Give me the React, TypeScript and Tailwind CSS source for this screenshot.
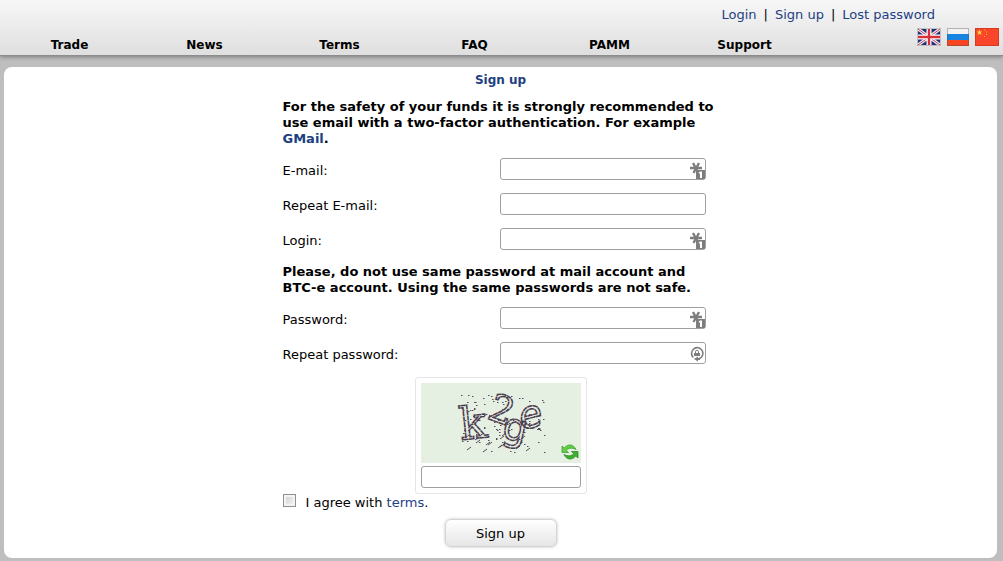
import React from 'react';

const navItems = ['Trade', 'News', 'Terms', 'FAQ', 'PAMM', 'Support'];

const StarOne: React.FC = () => (
  <svg width="17" height="18" viewBox="0 0 17 18" aria-hidden="true">
    <path d="M1 7h12M4 2l5.500 10M10 2L4.500 12" stroke="#7d7d7d" strokeWidth="2.400" />
    <rect x="7" y="9" width="9" height="9" fill="#7d7d7d" />
    <path d="M11 10.500h2V17h-2v-4.500H9.800v-1z" fill="#fff" />
  </svg>
);

const LockCycle: React.FC = () => (
  <svg width="17" height="18" viewBox="0 0 17 18" aria-hidden="true">
    <path d="M4.300 12.500a5.700 5.700 0 1 1 5.700 1.300" fill="none" stroke="#7d7d7d" strokeWidth="1.600" />
    <path d="M5 14l4-2.500V13h2v2H9v1.500z" fill="#7d7d7d" />
    <rect x="5" y="8" width="6" height="3" fill="#7d7d7d" />
    <path d="M6.500 8V6.800a1.500 1.500 0 0 1 3 0V8" fill="none" stroke="#7d7d7d" />
  </svg>
);

const FlagUK: React.FC = () => (
  <svg width="24" height="18" viewBox="0 0 24 18" aria-hidden="true">
    <rect x="1" y="1" width="22" height="16" fill="#20307c" />
    <path d="M1 1l22 16M23 1L1 17" stroke="#e8e8f0" strokeWidth="3.200" />
    <path d="M1 1l22 16M23 1L1 17" stroke="#d0404a" strokeWidth="1" />
    <path d="M12 1v16M1 9h22" stroke="#fff" strokeWidth="5" />
    <path d="M12 1v16M1 9h22" stroke="#d8303a" strokeWidth="2.400" />
    <rect x=".5" y=".5" width="23" height="17" fill="none" stroke="#777" strokeOpacity=".35" />
  </svg>
);

const FlagRussia: React.FC = () => (
  <svg width="22" height="18" viewBox="0 0 22 18" aria-hidden="true">
    <rect width="22" height="6" fill="#f2f2f2" />
    <rect y="6" width="22" height="6" fill="#1684e0" />
    <rect y="12" width="22" height="6" fill="#f8441f" />
    <rect x=".5" y=".5" width="21" height="17" fill="none" stroke="#555" strokeOpacity=".4" />
  </svg>
);

const FlagChina: React.FC = () => (
  <svg width="24" height="18" viewBox="0 0 24 18" aria-hidden="true">
    <rect width="24" height="18" fill="#f9452a" />
    <path d="M4.500 1.500l.8 2h2.100L5.800 4.800l.6 2.100-1.900-1.200-1.900 1.200.6-2.100L1.600 3.500h2.100z" fill="#ffd83c" />
    <path d="M9 2h1M11 4h1M11 6.500h1M9 8.500h1" stroke="#ffb52e" strokeWidth="1.2" />
    <rect x=".5" y=".5" width="23" height="17" fill="none" stroke="#a52a18" strokeOpacity=".4" />
  </svg>
);

// fixed pseudo-random dots, so the noise is the same on each render
const noise = (n: number) => {
  const v = Math.sin(n * 12.9898) * 43758.5453;
  return v - Math.floor(v);
};

const specks = Array.from({ length: 120 }, (_, i) => ({
  x: 40 + Math.floor(noise(i + 1) * 84),
  y: 12 + Math.floor(noise(i * 3.7 + 501) * 58),
}));

const Captcha: React.FC = () => (
  <svg width="160" height="80" viewBox="0 0 160 80" role="img" aria-label="Verification code" className="block bg-[#e5efe2]">
    {specks.map(({ x, y }, i) => (
      <path key={i} d={y > 52 && i % 2 ? `M${x} ${y}l4-3` : `M${x} ${y + 0.5}h1.500`} stroke="#574a5c" />
    ))}
    <g fill="none" stroke="#4b3c50" strokeWidth="1.500" strokeDasharray="5 .5">
      <text x="40" y="57" fontSize="45" fontFamily="DejaVu Serif, serif" transform="rotate(-6 40 57)">k</text>
      <text x="65" y="35" fontSize="38" fontFamily="DejaVu Serif, serif" transform="rotate(20 65 35)">2</text>
      <text x="80" y="55" fontSize="38" fontFamily="DejaVu Sans, sans-serif" transform="rotate(12 80 55)">g</text>
      <text x="101" y="47" fontSize="38" fontFamily="DejaVu Sans, sans-serif" fontStyle="italic" transform="rotate(-14 101 47)">e</text>
    </g>
  </svg>
);

const Refresh: React.FC = () => (
  <svg width="18" height="16" viewBox="0 0 18 16" aria-hidden="true">
    <path d="M1 2v6.500h6.500L5.300 6.300C7.500 3.800 11 3.500 15 5.500 12.500 0 7-.5 3.200 3.900z" fill="#62cf45" stroke="#2f9a24" strokeWidth=".7" />
    <path d="M17 14V7.500h-6.500l2.200 2.200C10.500 12.200 7 12.500 3 10.500c2.500 5.500 8 6 11.800 1.600z" fill="#3fb030" stroke="#22801a" strokeWidth=".7" />
  </svg>
);

type FieldProps = {
  id: string;
  label: string;
  type?: string;
  icon?: React.ReactNode;
};

const Field: React.FC<FieldProps> = ({ id, label, type = 'text', icon }) => (
  <div className="flex h-[35px] items-start justify-between">
    <label htmlFor={id} className="pt-[5px]">{label}</label>
    <div className="relative">
      <input id={id} type={type} className="block h-[22px] w-[206px] rounded-[3px] border border-[#a0a0a0] bg-white px-1 pr-5 outline-none" />
      {icon && <span className="pointer-events-none absolute top-[3px] right-0">{icon}</span>}
    </div>
  </div>
);

const link = 'text-[#1e3f82]';

export default function App() {
  return (
    <div className="flex min-h-screen flex-col bg-[#bebebe] font-['DejaVu_Sans',Verdana,sans-serif] text-[13px] leading-4 text-black">
      <header className="h-14 border-b border-[#8c8c8c] bg-linear-to-b from-[#f7f7f7] to-[#dfdfdf] pt-[7px] shadow-[0_1px_4px_rgba(0,0,0,0.35)]">
        <div className="flex justify-end gap-[7px] pr-[68px]">
          <a href="#" className={link}>Login</a>|
          <a href="#" className={link}>Sign up</a>|
          <a href="#" className={link}>Lost password</a>
        </div>
        <div className="mt-[5px] flex justify-between pr-1 pl-0.5">
          <nav className="flex pt-[9px] text-center text-xs leading-4 font-bold">
            {navItems.map((item) => (
              <a key={item} href="#" className="w-[135px]">{item}</a>
            ))}
          </nav>
          <div className="flex gap-1.5">
            <a href="#" aria-label="English"><FlagUK /></a>
            <a href="#" aria-label="Russian"><FlagRussia /></a>
            <a href="#" aria-label="Chinese"><FlagChina /></a>
          </div>
        </div>
      </header>

      <main className="mt-[11px] mr-1.5 mb-[3px] ml-1 grow rounded-lg bg-white pt-[5px]">
        <h1 className={`text-center text-xs leading-4 font-bold ${link}`}>Sign up</h1>
        <form className="mx-auto mt-[11px] w-[436px]">
          <p className="font-bold">
            For the safety of your funds it is strongly recommended to use email with a two-factor authentication. For example{' '}
            <a href="#" className={link}>GMail</a>.
          </p>
          <div className="mt-[11px] mb-px pr-[13px]">
            <Field id="email" label="E-mail:" icon={<StarOne />} />
            <Field id="email2" label="Repeat E-mail:" />
            <Field id="login" label="Login:" icon={<StarOne />} />
          </div>
          <p className="font-bold">
            Please, do not use same password at mail account and BTC-e account. Using the same passwords are not safe.
          </p>
          <div className="mt-[11px] pr-[13px]">
            <Field id="password" label="Password:" type="password" icon={<StarOne />} />
            <Field id="password2" label="Repeat password:" type="password" icon={<LockCycle />} />
          </div>
          <div className="mx-auto w-[172px] rounded-[3px] border border-[#e6e6e6] p-[5px]">
            <div className="relative">
              <Captcha />
              <button type="button" aria-label="New code" className="absolute right-0.5 bottom-[3px]"><Refresh /></button>
            </div>
            <input aria-label="Code" className="mt-[3px] block h-[22px] w-full rounded-[3px] border border-[#a0a0a0] px-1 outline-none" />
          </div>
          <div className="flex items-start">
            <input id="agree" type="checkbox" className="mr-2.5 h-[13px] w-[13px] appearance-none border border-[#8e8f8f] bg-linear-to-br from-[#cbcfd5] to-[#f6f6f6] shadow-[inset_0_0_0_2px_#f4f4f4]" />
            <label htmlFor="agree" className="pt-px">I agree with <a href="#" className={link}>terms</a>.</label>
          </div>
          <div className="mt-2 flex justify-center">
            <button type="submit" className="h-7 w-28 rounded-md border border-[#d4d4d4] bg-linear-to-b from-white to-[#e6e6e6] pt-px shadow-[0_0_3px_rgba(0,0,0,0.25)]">Sign up</button>
          </div>
        </form>
      </main>
    </div>
  );
}
